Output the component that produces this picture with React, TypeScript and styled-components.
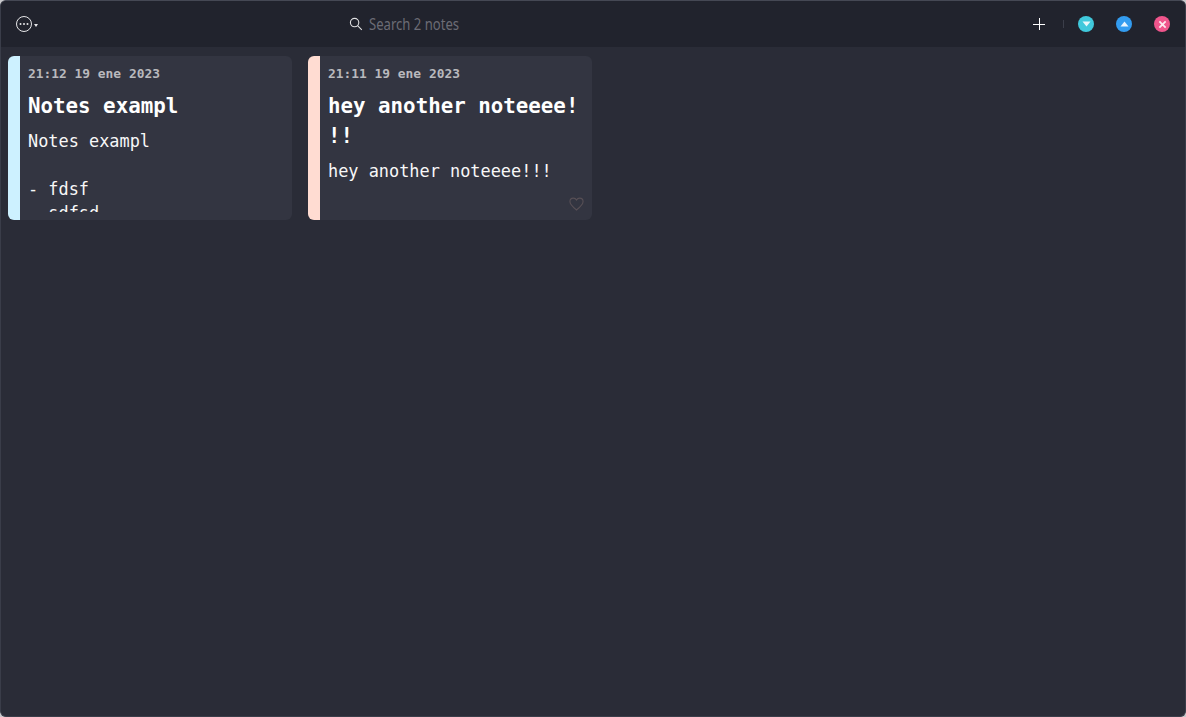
import { FC } from 'react';
import styled, { createGlobalStyle } from 'styled-components';

const GlobalStyle = createGlobalStyle`
	html, body {
		margin: 0;
		padding: 0;
		background: #c9c9cc;
	}
`;

type Note = {
	date: string;
	title: string;
	body: string;
	color: string;
	liked?: boolean;
};

const notes: Note[] = [
	{ date: '21:12 19 ene 2023', title: 'Notes exampl', body: 'Notes exampl\n\n- fdsf\n- sdfsd\n- sdf', color: '#cdf1ff' },
	{ date: '21:11 19 ene 2023', title: 'hey another noteeee!!!', body: 'hey another noteeee!!!', color: '#ffdcd2', liked: true },
];

const App: FC = () => (
	<>
		<GlobalStyle />
		<Window>
			<Toolbar>
				<MenuButton>
					<svg width="18" height="18" viewBox="0 0 18 18" fill="none">
						<circle cx="9" cy="9" r="7.5" stroke="#e6e6e8" strokeWidth="1" />
						<circle cx="5.5" cy="9" r="1" fill="#e6e6e8" />
						<circle cx="9" cy="9" r="1" fill="#e6e6e8" />
						<circle cx="12.5" cy="9" r="1" fill="#e6e6e8" />
					</svg>
					<Caret />
				</MenuButton>
				<SearchBox>
					<svg width="14" height="14" viewBox="0 0 14 14" fill="none" stroke="#e0e0e2" strokeWidth="1.1">
						<circle cx="5.6" cy="5.6" r="4.2" />
						<path d="M8.8 8.8 L12.8 12.8" />
					</svg>
					<SearchLabel>Search 2 notes</SearchLabel>
				</SearchBox>
				<Controls>
					<AddButton>
						<svg width="12" height="12" viewBox="0 0 12 12" stroke="#ffffff" strokeWidth="1">
							<path d="M6.5 0 V12 M0 6.5 H12" />
						</svg>
					</AddButton>
					<Divider />
					<WindowButton $bg="#40c9dc">
						<svg width="9" height="6" viewBox="0 0 9 6">
							<path d="M0.5 0.5 H8.5 L4.5 5.5 Z" fill="#e8f8fb" />
						</svg>
					</WindowButton>
					<WindowButton $bg="#339cf0">
						<svg width="9" height="6" viewBox="0 0 9 6">
							<path d="M0.5 5.5 H8.5 L4.5 0.5 Z" fill="#e8f4fe" />
						</svg>
					</WindowButton>
					<WindowButton $bg="#f0558c">
						<svg width="9" height="9" viewBox="0 0 10 10" stroke="#fde8ef" strokeWidth="2">
							<path d="M1.5 1.5 L8.5 8.5 M8.5 1.5 L1.5 8.5" />
						</svg>
					</WindowButton>
				</Controls>
			</Toolbar>
			<NotesGrid>
				{notes.map((note) => (
					<Card key={note.date} $color={note.color}>
						<CardContent>
							<NoteDate>{note.date}</NoteDate>
							<NoteTitle>{note.title}</NoteTitle>
							<NoteBody>{note.body}</NoteBody>
						</CardContent>
						{note.liked && (
							<HeartIcon>
								<svg width="15" height="14" viewBox="0 0 24 22" fill="none" stroke="#574f55" strokeWidth="1.8">
									<path d="M12 20.5 C5 15 1.5 11.5 1.5 7 C1.5 3.8 4 1.5 7 1.5 C9 1.5 11 2.6 12 4.5 C13 2.6 15 1.5 17 1.5 C20 1.5 22.5 3.8 22.5 7 C22.5 11.5 19 15 12 20.5 Z" />
								</svg>
							</HeartIcon>
						)}
					</Card>
				))}
			</NotesGrid>
		</Window>
	</>
);

const Window = styled.div`
	box-sizing: border-box;
	display: flex;
	flex-direction: column;
	width: 1186px;
	height: 717px;
	overflow: hidden;
	border: 1px solid #3a3d49;
	border-top-color: #454854;
	border-radius: 6px;
	background-color: #2a2c37;
`;

const Toolbar = styled.header`
	position: relative;
	flex: none;
	display: flex;
	align-items: center;
	justify-content: space-between;
	height: 46px;
	padding: 0 15px 0 14px;
	background-color: #21232d;
`;

const MenuButton = styled.div`
	display: flex;
	align-items: center;
`;

const Caret = styled.span`
	width: 0;
	height: 0;
	margin: 3px 0 0 1px;
	border-left: 2.5px solid transparent;
	border-right: 2.5px solid transparent;
	border-top: 3px solid #e6e6e8;
`;

const SearchBox = styled.div`
	position: absolute;
	left: 348px;
	top: 0;
	height: 46px;
	display: flex;
	align-items: center;
	gap: 6px;
`;

const SearchLabel = styled.span`
	display: inline-block;
	margin-top: -2px;
	font-family: 'Noto Sans', sans-serif;
	font-size: 17px;
	color: #6c6c75;
	transform: scaleX(0.77);
	transform-origin: left center;
	white-space: nowrap;
`;

const Controls = styled.div`
	display: flex;
	align-items: center;
`;

const AddButton = styled.div`
	display: flex;
	margin-right: 18px;
`;

const Divider = styled.span`
	width: 1px;
	height: 8px;
	margin-right: 14px;
	background-color: #3b3e4a;
`;

const WindowButton = styled.div<{ $bg: string }>`
	display: flex;
	align-items: center;
	justify-content: center;
	width: 16px;
	height: 16px;
	border-radius: 50%;
	background-color: ${({ $bg }) => $bg};

	& + & {
		margin-left: 22px;
	}
`;

const NotesGrid = styled.main`
	display: grid;
	grid-template-columns: repeat(auto-fill, 284px);
	gap: 16px;
	padding: 9px 7px;
`;

const Card = styled.article<{ $color: string }>`
	position: relative;
	box-sizing: border-box;
	height: 164px;
	overflow: hidden;
	border-left: 12px solid ${({ $color }) => $color};
	border-radius: 6px;
	background-color: #333541;
`;

const CardContent = styled.div`
	height: 156px;
	padding: 8px 4px 0 8px;
	overflow: hidden;
	box-sizing: border-box;
	font-family: 'DejaVu Sans Mono', monospace;
	color: #f8f8f8;
`;

const NoteDate = styled.div`
	font-size: 12.9px;
	line-height: 19px;
	font-weight: 700;
	color: #b9b9bd;
`;

const NoteTitle = styled.h2`
	margin: 8px 0 0;
	font-size: 20.8px;
	line-height: 30px;
	font-weight: 700;
	color: #ffffff;
	line-break: anywhere;
`;

const NoteBody = styled.p`
	margin: 8px 0 0;
	font-size: 16.9px;
	line-height: 24px;
	white-space: pre-wrap;
`;

const HeartIcon = styled.span`
	position: absolute;
	right: 8px;
	bottom: 9px;
	display: flex;
`;

export default App;
